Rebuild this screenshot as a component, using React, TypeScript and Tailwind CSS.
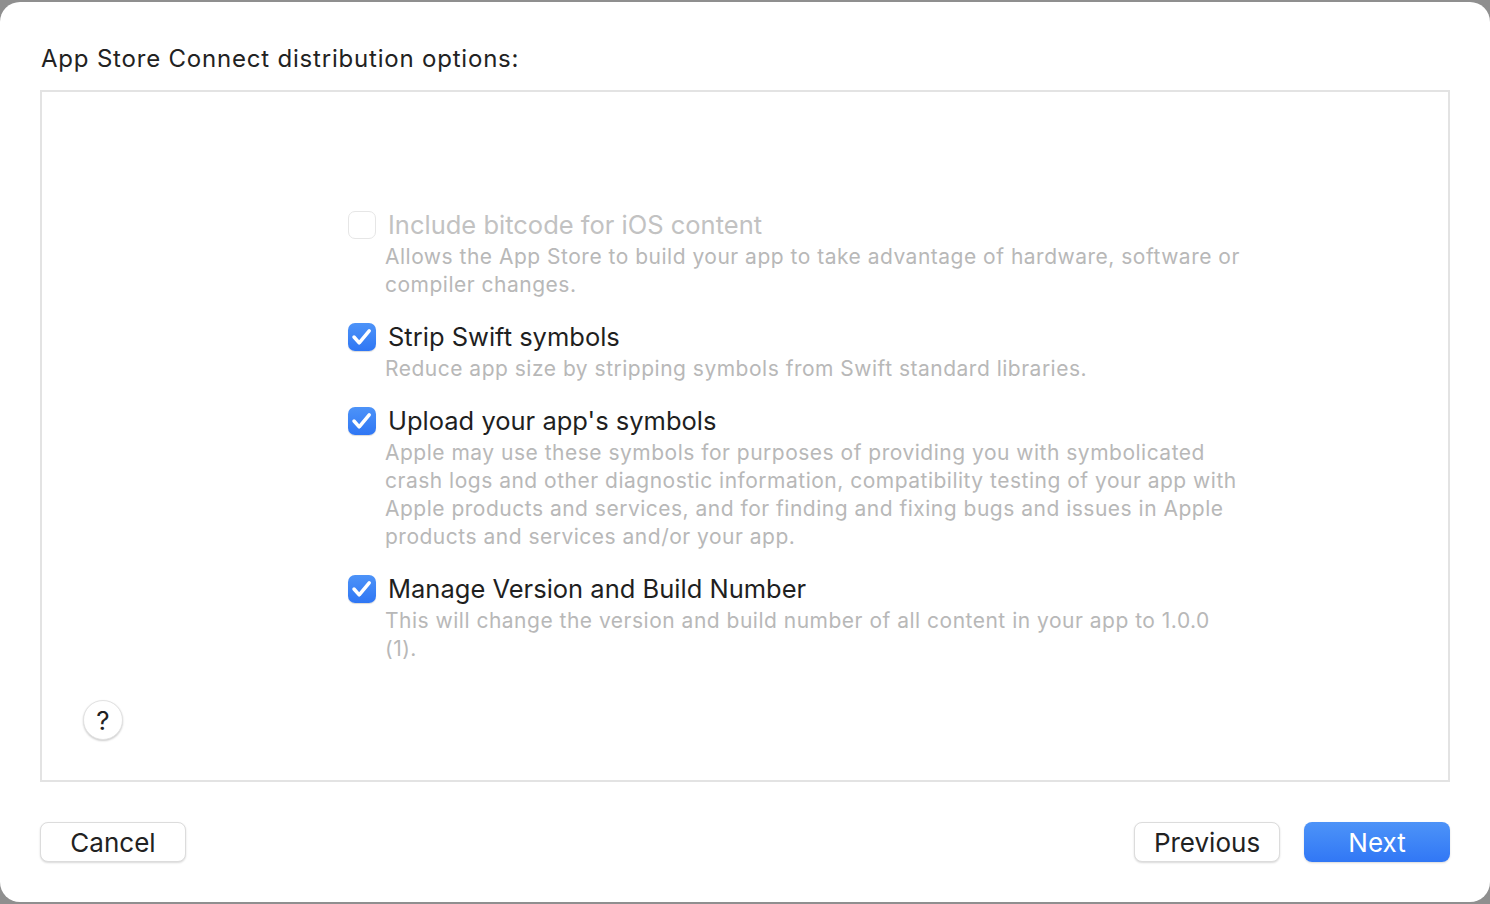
import React from "react";

const font = { fontFamily: "Inter, 'Noto Sans', sans-serif" };

type Option = {
  id: string;
  title: string;
  lines: string[];
  checked: boolean;
  disabled?: boolean;
};

const options: Option[] = [
  {
    id: "bitcode",
    title: "Include bitcode for iOS content",
    lines: [
      "Allows the App Store to build your app to take advantage of hardware, software or",
      "compiler changes.",
    ],
    checked: false,
    disabled: true,
  },
  {
    id: "strip",
    title: "Strip Swift symbols",
    lines: ["Reduce app size by stripping symbols from Swift standard libraries."],
    checked: true,
  },
  {
    id: "upload",
    title: "Upload your app's symbols",
    lines: [
      "Apple may use these symbols for purposes of providing you with symbolicated",
      "crash logs and other diagnostic information, compatibility testing of your app with",
      "Apple products and services, and for finding and fixing bugs and issues in Apple",
      "products and services and/or your app.",
    ],
    checked: true,
  },
  {
    id: "version",
    title: "Manage Version and Build Number",
    lines: [
      "This will change the version and build number of all content in your app to 1.0.0",
      "(1).",
    ],
    checked: true,
  },
];

function Checkbox({ checked, disabled }: { checked: boolean; disabled?: boolean }) {
  if (checked) {
    return (
      <div className="w-[28px] h-[28px] rounded-[7px] bg-gradient-to-b from-[#4d93f8] to-[#2f76f4] flex items-center justify-center shadow-[0_1px_1px_rgba(0,0,0,0.15)] shrink-0">
        <svg width="28" height="28" viewBox="0 0 28 28" fill="none">
          <path d="M6 14 L11.2 19.8 L21.2 7.8" stroke="#ffffff" strokeWidth="3.5" strokeLinecap="round" strokeLinejoin="round" />
        </svg>
      </div>
    );
  }
  return (
    <div
      className={
        "w-[28px] h-[28px] rounded-[7px] bg-white border shrink-0 " +
        (disabled ? "border-[#e6e6e6]" : "border-[#c8c8c8]")
      }
    />
  );
}

export default function App() {
  return (
    <div className="w-[1490px] h-[904px] bg-[#8f8f8f] pt-[2px] pb-[2px]" style={font}>
      <div className="w-full h-full bg-white rounded-[20px] flex flex-col px-[40px] pt-[42px]">
        <h1 className="text-[24px] leading-[30px] tracking-[0.8px] text-[#222222] pl-[1px]">
          App Store Connect distribution options:
        </h1>

        {/* options box */}
        <div className="mt-[16px] h-[692px] border-2 border-[#e3e3e3] flex flex-col">
          <div className="pl-[306px] pt-[119px] flex flex-col gap-[24px]">
            {options.map((o) => (
              <div key={o.id} className="flex flex-col">
                <div className="flex items-center gap-[12px] h-[28px]">
                  <Checkbox checked={o.checked} disabled={o.disabled} />
                  <span
                    className={
                      "text-[25.5px] leading-[28px] " +
                      (o.disabled ? "text-[#c2c2c2]" : "text-[#1f1f1f]")
                    }
                  >
                    {o.title}
                  </span>
                </div>
                <div className="pl-[37px] pt-[4px] text-[21px] leading-[28px] tracking-[0.5px] text-[#b8b8b8]">
                  {o.lines.map((l, i) => (
                    <div key={i} className="whitespace-nowrap">
                      {l}
                    </div>
                  ))}
                </div>
              </div>
            ))}
          </div>

          <div className="mt-auto mb-[40px] ml-[41px] w-[40px] h-[40px] rounded-full bg-white border border-[#e2e2e2] shadow-[0_1px_2px_rgba(0,0,0,0.2)] flex items-center justify-center text-[26px] text-[#222]">
            ?
          </div>
        </div>

        {/* footer buttons */}
        <div className="flex items-center mt-[40px]">
          <button className="w-[146px] h-[40px] rounded-[8px] bg-white border border-[#dcdcdc] shadow-[0_1px_2px_rgba(0,0,0,0.15)] text-[26px] text-[#222]">
            Cancel
          </button>
          <div className="flex-1" />
          <button className="w-[146px] h-[40px] rounded-[8px] bg-white border border-[#dcdcdc] shadow-[0_1px_2px_rgba(0,0,0,0.15)] text-[26px] text-[#222]">
            Previous
          </button>
          <button className="ml-[24px] w-[146px] h-[40px] rounded-[8px] bg-gradient-to-b from-[#4d93f8] to-[#3177f5] shadow-[0_1px_2px_rgba(0,0,0,0.15)] text-[26px] text-white">
            Next
          </button>
        </div>
      </div>
    </div>
  );
}
